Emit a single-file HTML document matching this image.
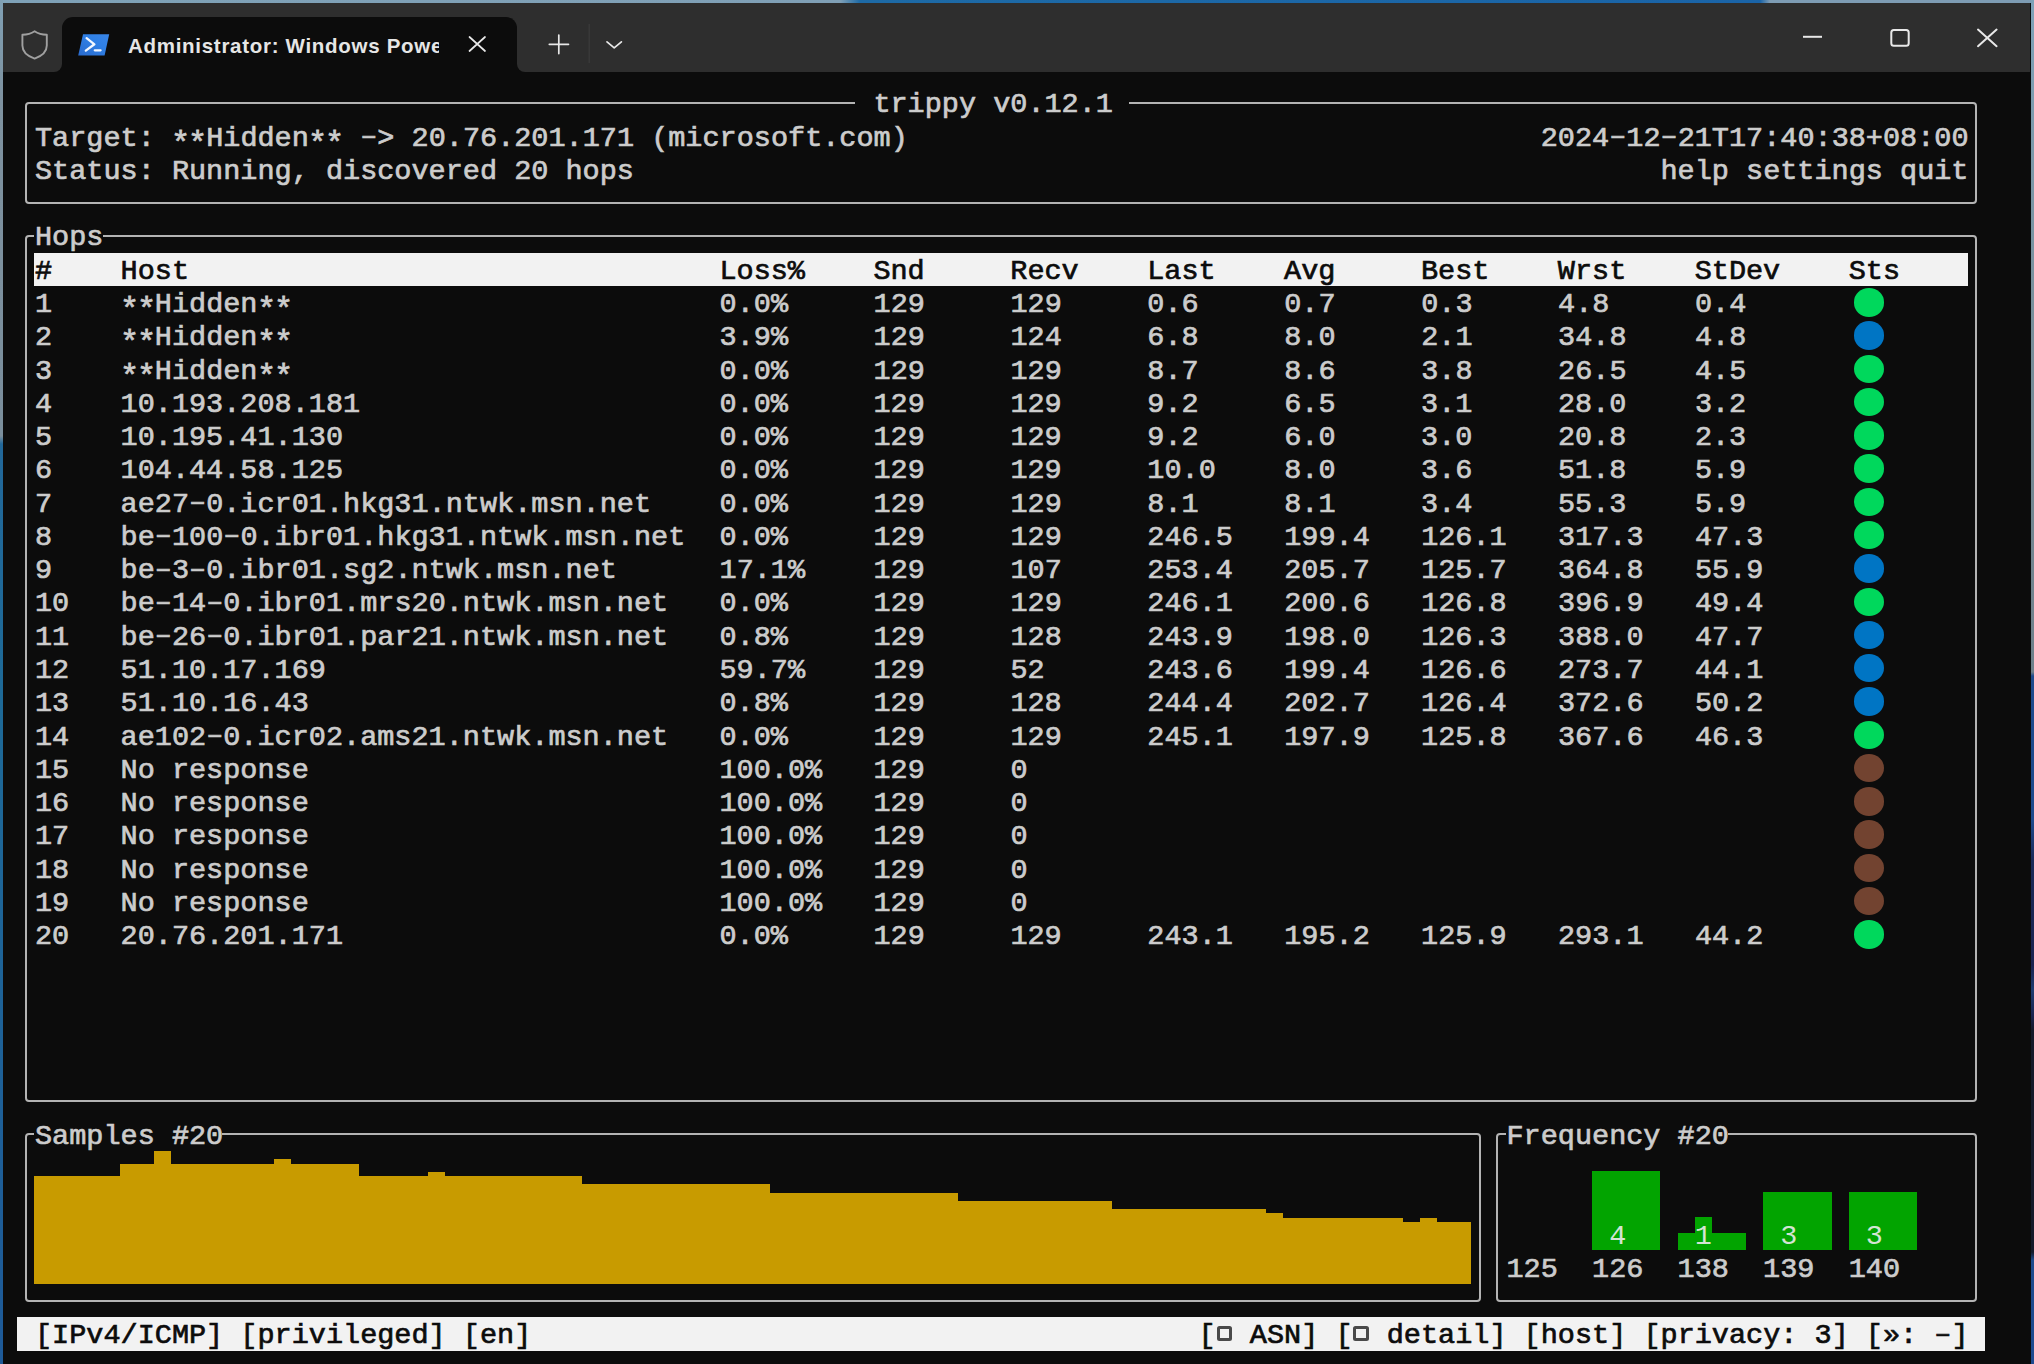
<!DOCTYPE html>
<html><head><meta charset="utf-8"><style>
html,body{margin:0;padding:0;}
body{width:2034px;height:1364px;position:relative;overflow:hidden;background:#0c0c0c;}
.t{position:absolute;font-family:"Liberation Mono",monospace;font-size:28.52px;line-height:33.27px;height:33.27px;white-space:pre;color:#cccccc;padding-top:2px;box-sizing:border-box;-webkit-text-stroke:0.7px currentColor;}
.r{position:absolute;}
.h{display:inline-block;position:relative;top:-1.5px}
.s{display:inline-block;transform-origin:50% 10.8px;transform:translateY(5.5px) scale(1.12)}
.box{position:absolute;border:2px solid #b4b4b4;border-radius:4px;box-sizing:border-box;}
</style></head><body>
<div class="r" style="left:0;top:0;width:2034px;height:3px;background:linear-gradient(90deg,#7fa2b8 0,#80a0b6 840px,#1d6aa6 860px,#1a64a8 1760px,#7e9cb4 1770px,#7e9cb4 100%)"></div><div class="r" style="left:0;top:0;width:3px;height:1364px;background:linear-gradient(180deg,#80a0b4 0,#7e92a0 100px,#7a8e9c 436px,#22689a 444px,#1e6a98 700px,#1e5a98 100%)"></div><div class="r" style="left:2030.5px;top:0;width:3.5px;height:1364px;background:linear-gradient(180deg,#7ea2b8 0,#78909c 300px,#6e808a 672px,#1e4a8c 676px,#1e4a8c 820px,#1a2a58 860px,#1a2450 965px,#1e3c70 990px,#1a2450 1015px,#151a2a 1030px,#151a2a 1252px,#1e4a8c 1260px,#1e4a90 100%)"></div><div class="r" style="left:3px;top:3px;width:2027px;height:30px;background:#2e2e2e"></div><div class="r" style="left:3px;top:72px;width:2027px;height:1292px;background:#0c0c0c"></div>
<div class="r" style="left:3px;top:3px;width:59px;height:69px;background:#2e2e2e;border-bottom-right-radius:8px"></div>
<div class="r" style="left:517px;top:3px;width:1513px;height:69px;background:#2e2e2e;border-bottom-left-radius:8px"></div>
<div class="r" style="left:62px;top:17px;width:455px;height:60px;background:#0c0c0c;border-radius:11px 11px 0 0"></div>
<svg class="r" style="left:0;top:0" width="700" height="80" viewBox="0 0 700 80">
 <path d="M34.6,31.2 C38.2,33.6 42,34.6 46.8,34.8 L46.8,45.5 C46.8,51.5 42.5,55.8 34.6,58.6 C26.7,55.8 22.4,51.5 22.4,45.5 L22.4,34.8 C27.2,34.6 31,33.6 34.6,31.2 Z" fill="none" stroke="#a0a0a0" stroke-width="1.9" stroke-linejoin="round"/>
 <defs><linearGradient id="psg" x1="0" y1="1" x2="1" y2="0"><stop offset="0" stop-color="#2a6acc"/><stop offset="0.6" stop-color="#2f80e6"/><stop offset="1" stop-color="#3a86e8"/></linearGradient></defs>
 <path d="M83,34.2 L109.2,34.2 L104.6,55.6 L78.2,55.6 Z" fill="url(#psg)"/>
 <path d="M86.6,38.2 L94.4,44.3 L85.8,50.6" fill="none" stroke="#f4f8ff" stroke-width="2.3" stroke-linecap="round" stroke-linejoin="round"/>
 <path d="M94.8,50.3 L100.6,50.3" fill="none" stroke="#f4f8ff" stroke-width="2.3" stroke-linecap="round"/>
 <path d="M469.5,37 L485,51 M485,37 L469.5,51" stroke="#e8e8e8" stroke-width="1.7" stroke-linecap="round"/>
 <path d="M558.8,35 L558.8,53.6 M549.3,44.3 L568.5,44.3" stroke="#e8e8e8" stroke-width="1.7" stroke-linecap="round"/>
 <path d="M589.2,24 L589.2,63" stroke="#3c3c3c" stroke-width="1.2"/>
 <path d="M607,41.8 L614.2,47.8 L621.4,41.8" fill="none" stroke="#e8e8e8" stroke-width="1.7" stroke-linecap="round" stroke-linejoin="round"/>
</svg>
<div class="r" style="left:128px;top:29px;width:311px;height:34px;overflow:hidden;white-space:nowrap;font-family:'Liberation Sans',sans-serif;font-weight:bold;font-size:20.5px;letter-spacing:0.71px;line-height:34px;color:#e6e6e6">Administrator: Windows PowerShell</div>
<svg class="r" style="left:1780px;top:0" width="250" height="80" viewBox="1780 0 250 80">
 <path d="M1803,36.8 L1822,36.8" stroke="#e8e8e8" stroke-width="2"/>
 <rect x="1891.3" y="30" width="17.4" height="15.8" rx="2.5" fill="none" stroke="#e8e8e8" stroke-width="2"/>
 <path d="M1978,29.6 L1996.6,46.2 M1996.6,29.6 L1978,46.2" stroke="#e8e8e8" stroke-width="2" stroke-linecap="round"/>
</svg>
<div class="box" style="left:24.66px;top:102.04px;width:1952.54px;height:101.81px;"></div><div class="r" style="left:855.49px;top:86.40px;width:273.76px;height:33.27px;background:#0c0c0c;"></div><div class="t" style="left:873.40px;top:86.40px;">trippy v0.12.1</div><div class="t" style="left:35.01px;top:119.67px;">Target: <span class="s">*</span><span class="s">*</span>Hidden<span class="s">*</span><span class="s">*</span> <span class="h">–</span>&gt; 20.76.201.171 (microsoft.com)</div><div class="t" style="left:35.01px;top:152.94px;">Status: Running, discovered 20 hops</div><div class="t" style="left:1540.69px;top:119.67px;">2024<span class="h">–</span>12<span class="h">–</span>21T17:40:38+08:00</div><div class="t" style="left:1660.46px;top:152.94px;">help settings quit</div><div class="box" style="left:24.66px;top:235.12px;width:1952.54px;height:867.02px;"></div><div class="r" style="left:34.21px;top:219.48px;width:68.44px;height:33.27px;background:#0c0c0c;"></div><div class="t" style="left:35.01px;top:219.48px;">Hops</div><div class="r" style="left:34.21px;top:252.75px;width:1933.43px;height:33.27px;background:#f2f2f2;"></div><div class="t" style="left:35.01px;top:252.75px;color:#0c0c0c;">#</div><div class="t" style="left:120.56px;top:252.75px;color:#0c0c0c;">Host</div><div class="t" style="left:719.41px;top:252.75px;color:#0c0c0c;">Loss%</div><div class="t" style="left:873.40px;top:252.75px;color:#0c0c0c;">Snd</div><div class="t" style="left:1010.28px;top:252.75px;color:#0c0c0c;">Recv</div><div class="t" style="left:1147.16px;top:252.75px;color:#0c0c0c;">Last</div><div class="t" style="left:1284.04px;top:252.75px;color:#0c0c0c;">Avg</div><div class="t" style="left:1420.92px;top:252.75px;color:#0c0c0c;">Best</div><div class="t" style="left:1557.80px;top:252.75px;color:#0c0c0c;">Wrst</div><div class="t" style="left:1694.68px;top:252.75px;color:#0c0c0c;">StDev</div><div class="t" style="left:1848.67px;top:252.75px;color:#0c0c0c;">Sts</div><div class="t" style="left:35.01px;top:286.02px;">1    <span class="s">*</span><span class="s">*</span>Hidden<span class="s">*</span><span class="s">*</span>                         0.0%     129     129     0.6     0.7     0.3     4.8     0.4</div><div class="r" style="left:1854.10px;top:288.12px;width:30.4px;height:28.4px;border-radius:50%;background:#00d85c"></div><div class="t" style="left:35.01px;top:319.29px;">2    <span class="s">*</span><span class="s">*</span>Hidden<span class="s">*</span><span class="s">*</span>                         3.9%     129     124     6.8     8.0     2.1     34.8    4.8</div><div class="r" style="left:1854.10px;top:321.39px;width:30.4px;height:28.4px;border-radius:50%;background:#0075c4"></div><div class="t" style="left:35.01px;top:352.56px;">3    <span class="s">*</span><span class="s">*</span>Hidden<span class="s">*</span><span class="s">*</span>                         0.0%     129     129     8.7     8.6     3.8     26.5    4.5</div><div class="r" style="left:1854.10px;top:354.66px;width:30.4px;height:28.4px;border-radius:50%;background:#00d85c"></div><div class="t" style="left:35.01px;top:385.83px;">4    10.193.208.181                     0.0%     129     129     9.2     6.5     3.1     28.0    3.2</div><div class="r" style="left:1854.10px;top:387.93px;width:30.4px;height:28.4px;border-radius:50%;background:#00d85c"></div><div class="t" style="left:35.01px;top:419.10px;">5    10.195.41.130                      0.0%     129     129     9.2     6.0     3.0     20.8    2.3</div><div class="r" style="left:1854.10px;top:421.20px;width:30.4px;height:28.4px;border-radius:50%;background:#00d85c"></div><div class="t" style="left:35.01px;top:452.37px;">6    104.44.58.125                      0.0%     129     129     10.0    8.0     3.6     51.8    5.9</div><div class="r" style="left:1854.10px;top:454.47px;width:30.4px;height:28.4px;border-radius:50%;background:#00d85c"></div><div class="t" style="left:35.01px;top:485.64px;">7    ae27<span class="h">–</span>0.icr01.hkg31.ntwk.msn.net    0.0%     129     129     8.1     8.1     3.4     55.3    5.9</div><div class="r" style="left:1854.10px;top:487.74px;width:30.4px;height:28.4px;border-radius:50%;background:#00d85c"></div><div class="t" style="left:35.01px;top:518.91px;">8    be<span class="h">–</span>100<span class="h">–</span>0.ibr01.hkg31.ntwk.msn.net  0.0%     129     129     246.5   199.4   126.1   317.3   47.3</div><div class="r" style="left:1854.10px;top:521.01px;width:30.4px;height:28.4px;border-radius:50%;background:#00d85c"></div><div class="t" style="left:35.01px;top:552.18px;">9    be<span class="h">–</span>3<span class="h">–</span>0.ibr01.sg2.ntwk.msn.net      17.1%    129     107     253.4   205.7   125.7   364.8   55.9</div><div class="r" style="left:1854.10px;top:554.28px;width:30.4px;height:28.4px;border-radius:50%;background:#0075c4"></div><div class="t" style="left:35.01px;top:585.45px;">10   be<span class="h">–</span>14<span class="h">–</span>0.ibr01.mrs20.ntwk.msn.net   0.0%     129     129     246.1   200.6   126.8   396.9   49.4</div><div class="r" style="left:1854.10px;top:587.55px;width:30.4px;height:28.4px;border-radius:50%;background:#00d85c"></div><div class="t" style="left:35.01px;top:618.72px;">11   be<span class="h">–</span>26<span class="h">–</span>0.ibr01.par21.ntwk.msn.net   0.8%     129     128     243.9   198.0   126.3   388.0   47.7</div><div class="r" style="left:1854.10px;top:620.82px;width:30.4px;height:28.4px;border-radius:50%;background:#0075c4"></div><div class="t" style="left:35.01px;top:651.99px;">12   51.10.17.169                       59.7%    129     52      243.6   199.4   126.6   273.7   44.1</div><div class="r" style="left:1854.10px;top:654.09px;width:30.4px;height:28.4px;border-radius:50%;background:#0075c4"></div><div class="t" style="left:35.01px;top:685.26px;">13   51.10.16.43                        0.8%     129     128     244.4   202.7   126.4   372.6   50.2</div><div class="r" style="left:1854.10px;top:687.36px;width:30.4px;height:28.4px;border-radius:50%;background:#0075c4"></div><div class="t" style="left:35.01px;top:718.53px;">14   ae102<span class="h">–</span>0.icr02.ams21.ntwk.msn.net   0.0%     129     129     245.1   197.9   125.8   367.6   46.3</div><div class="r" style="left:1854.10px;top:720.63px;width:30.4px;height:28.4px;border-radius:50%;background:#00d85c"></div><div class="t" style="left:35.01px;top:751.80px;">15   No response                        100.0%   129     0</div><div class="r" style="left:1854.10px;top:753.90px;width:30.4px;height:28.4px;border-radius:50%;background:#724330"></div><div class="t" style="left:35.01px;top:785.07px;">16   No response                        100.0%   129     0</div><div class="r" style="left:1854.10px;top:787.17px;width:30.4px;height:28.4px;border-radius:50%;background:#724330"></div><div class="t" style="left:35.01px;top:818.34px;">17   No response                        100.0%   129     0</div><div class="r" style="left:1854.10px;top:820.44px;width:30.4px;height:28.4px;border-radius:50%;background:#724330"></div><div class="t" style="left:35.01px;top:851.61px;">18   No response                        100.0%   129     0</div><div class="r" style="left:1854.10px;top:853.71px;width:30.4px;height:28.4px;border-radius:50%;background:#724330"></div><div class="t" style="left:35.01px;top:884.88px;">19   No response                        100.0%   129     0</div><div class="r" style="left:1854.10px;top:886.98px;width:30.4px;height:28.4px;border-radius:50%;background:#724330"></div><div class="t" style="left:35.01px;top:918.15px;">20   20.76.201.171                      0.0%     129     129     243.1   195.2   125.9   293.1   44.2</div><div class="r" style="left:1854.10px;top:920.25px;width:30.4px;height:28.4px;border-radius:50%;background:#00d85c"></div><div class="box" style="left:24.66px;top:1133.41px;width:1456.35px;height:168.35px;"></div><div class="r" style="left:34.21px;top:1117.77px;width:188.21px;height:33.27px;background:#0c0c0c;"></div><div class="t" style="left:35.01px;top:1117.77px;">Samples #20</div><div class="r" style="left:34.21px;top:1175.99px;width:85.55px;height:108.13px;background:#c89b00;"></div><div class="r" style="left:119.76px;top:1163.52px;width:34.22px;height:120.60px;background:#c89b00;"></div><div class="r" style="left:153.98px;top:1151.04px;width:17.11px;height:133.08px;background:#c89b00;"></div><div class="r" style="left:171.09px;top:1163.52px;width:102.66px;height:120.60px;background:#c89b00;"></div><div class="r" style="left:273.75px;top:1159.36px;width:17.11px;height:124.76px;background:#c89b00;"></div><div class="r" style="left:290.86px;top:1163.52px;width:68.44px;height:120.60px;background:#c89b00;"></div><div class="r" style="left:359.30px;top:1175.99px;width:68.44px;height:108.13px;background:#c89b00;"></div><div class="r" style="left:427.74px;top:1171.83px;width:17.11px;height:112.29px;background:#c89b00;"></div><div class="r" style="left:444.85px;top:1175.99px;width:136.88px;height:108.13px;background:#c89b00;"></div><div class="r" style="left:581.73px;top:1184.31px;width:188.21px;height:99.81px;background:#c89b00;"></div><div class="r" style="left:769.94px;top:1192.63px;width:188.21px;height:91.49px;background:#c89b00;"></div><div class="r" style="left:958.15px;top:1200.95px;width:153.99px;height:83.17px;background:#c89b00;"></div><div class="r" style="left:1112.14px;top:1209.26px;width:153.99px;height:74.86px;background:#c89b00;"></div><div class="r" style="left:1266.13px;top:1213.42px;width:17.11px;height:70.70px;background:#c89b00;"></div><div class="r" style="left:1283.24px;top:1217.58px;width:119.77px;height:66.54px;background:#c89b00;"></div><div class="r" style="left:1403.01px;top:1221.74px;width:17.11px;height:62.38px;background:#c89b00;"></div><div class="r" style="left:1420.12px;top:1217.58px;width:17.11px;height:66.54px;background:#c89b00;"></div><div class="r" style="left:1437.23px;top:1221.74px;width:34.22px;height:62.38px;background:#c89b00;"></div><div class="box" style="left:1496.11px;top:1133.41px;width:481.08px;height:168.35px;"></div><div class="r" style="left:1505.67px;top:1117.77px;width:222.43px;height:33.27px;background:#0c0c0c;"></div><div class="t" style="left:1506.47px;top:1117.77px;">Frequency #20</div><div class="r" style="left:1592.02px;top:1171.03px;width:68.44px;height:79.02px;background:#02a400;"></div><div class="r" style="left:1677.57px;top:1233.42px;width:68.44px;height:16.63px;background:#02a400;"></div><div class="r" style="left:1763.12px;top:1191.83px;width:68.44px;height:58.22px;background:#02a400;"></div><div class="r" style="left:1848.67px;top:1191.83px;width:68.44px;height:58.22px;background:#02a400;"></div><div class="r" style="left:1694.68px;top:1216.78px;width:17.11px;height:33.27px;background:#02a400;"></div><div class="t" style="left:1609.13px;top:1217.58px;color:#d4e4d4;-webkit-text-stroke:0;">4</div><div class="t" style="left:1694.68px;top:1217.58px;color:#d4e4d4;-webkit-text-stroke:0;">1</div><div class="t" style="left:1780.23px;top:1217.58px;color:#d4e4d4;-webkit-text-stroke:0;">3</div><div class="t" style="left:1865.78px;top:1217.58px;color:#d4e4d4;-webkit-text-stroke:0;">3</div><div class="t" style="left:1506.47px;top:1250.85px;">125</div><div class="t" style="left:1592.02px;top:1250.85px;">126</div><div class="t" style="left:1677.57px;top:1250.85px;">138</div><div class="t" style="left:1763.12px;top:1250.85px;">139</div><div class="t" style="left:1848.67px;top:1250.85px;">140</div><div class="r" style="left:17.10px;top:1317.39px;width:1967.65px;height:33.27px;background:#f2f2f2;"></div><div class="t" style="left:35.01px;top:1317.39px;color:#0c0c0c;">[IPv4/ICMP] [privileged] [en]</div><div class="t" style="left:1198.49px;top:1317.39px;color:#0c0c0c;">[  ASN] [  detail] [host] [privacy: 3] [»: <span class="h">–</span>]</div><div class="r" style="left:1216.50px;top:1325.9px;width:15.7px;height:15.1px;border:3px solid #4a4a4a;border-radius:2.5px;box-sizing:border-box"></div><div class="r" style="left:1353.38px;top:1325.9px;width:15.7px;height:15.1px;border:3px solid #4a4a4a;border-radius:2.5px;box-sizing:border-box"></div></body></html>
